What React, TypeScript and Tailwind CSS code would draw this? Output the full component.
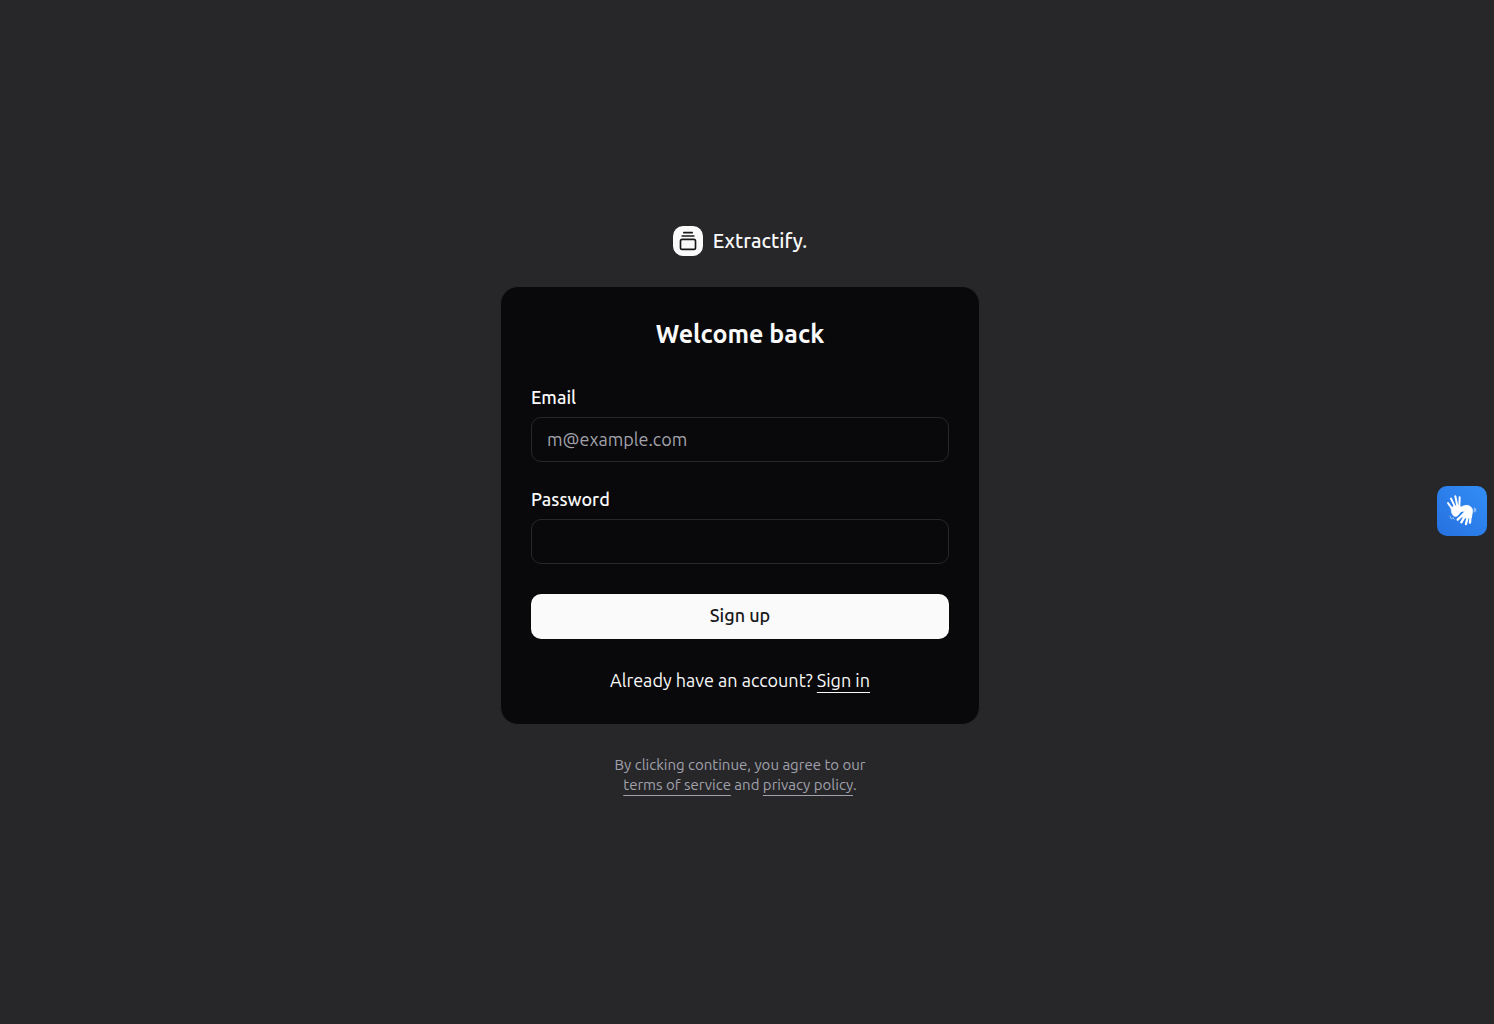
import React from "react";
import { GalleryVerticalEnd } from "lucide-react";

function HandsIcon() {
  return (
    <svg viewBox="0 0 150 150" className="size-[50px]" fill="none" strokeLinecap="round" strokeLinejoin="round" aria-hidden="true">
      <g stroke="#fff" strokeWidth="6">
        <path d="M33 51L47 71M42 38L55 64M55 31L61 60M68 34L67 62" />
      </g>
      <path d="M43 66L50 60L69 59L71 65C65 68 57 72 58 76C63 79 69 76 73 76L61 90C53 94 47 88 44 80Z" fill="#fff" stroke="#fff" strokeWidth="2" />
      <path d="M60 71C68 66 76 59 88 58C99 58 107 66 107 76L103 95L79 96L73 89L83 76C75 75 67 80 60 76Z" fill="#fff" stroke="#fff" strokeWidth="2" />
      <g stroke="#fff" strokeWidth="7">
        <path d="M80 84L62 101M85 88L73 109M93 89L87 114M101 86L99 110" />
      </g>
      <path d="M39 90L43 99L49 94M49 97L52 100M112 66L112 78M116 68L116 76" stroke="#d5e7ff" strokeWidth="2" />
    </svg>
  );
}

const field =
  "h-[45px] w-full rounded-[10px] border border-[#27272a] bg-transparent px-[15px] pb-0.5 text-[18px] text-[#fafafa] outline-none placeholder:text-[#a1a1aa]";

export default function App() {
  return (
    <main className="flex min-h-screen flex-col items-center justify-center gap-[30px] bg-[#27272a] pr-[14px] pb-[3px] font-['Ubuntu','Noto_Sans',sans-serif] text-[#fafafa]">
      <a href="#" className="flex items-center gap-[10px] text-[20px] leading-[30px] font-medium">
        <span className="flex size-[30px] items-center justify-center rounded-[10px] bg-[#fafafa] text-[#18181b]">
          <GalleryVerticalEnd className="size-5" />
        </span>
        Extractify.
      </a>

      <section className="w-full max-w-[480px] rounded-[18px] border border-[#27272a] bg-[#09090b] p-[30px]">
        <h1 className="text-center text-[25px] leading-[35px] font-bold">Welcome back</h1>
        <form className="mt-[38px] flex flex-col gap-[30px]" onSubmit={(e) => e.preventDefault()}>
          <div className="flex flex-col gap-3">
            <label htmlFor="email" className="text-[18px] leading-[15px] font-medium">Email</label>
            <input id="email" type="email" placeholder="m@example.com" className={field} />
          </div>
          <div className="flex flex-col gap-3">
            <label htmlFor="password" className="text-[18px] leading-[15px] font-medium">Password</label>
            <input id="password" type="password" className={field} />
          </div>
          <button type="submit" className="h-[45px] rounded-[10px] bg-[#fafafa] pb-0.5 text-[18px] font-medium text-[#18181b]">
            Sign up
          </button>
          <p className="pb-0.5 text-center text-[18px] leading-[23px]">
            Already have an account?{" "}
            <a href="#" className="underline underline-offset-[5px]">Sign in</a>
          </p>
        </form>
      </section>

      <p className="text-center text-[15px] leading-5 text-[#a1a1aa]">
        By clicking continue, you agree to our
        <br />
        <a href="#" className="underline underline-offset-[5px]">terms of service</a> and{" "}
        <a href="#" className="underline underline-offset-[5px]">privacy policy</a>.
      </p>

      <button
        type="button"
        aria-label="Sign language translation"
        className="fixed top-1/2 right-[7px] -mt-[26px] size-[50px] rounded-[10px] bg-linear-to-tr from-[#2670e0] to-[#338ef7]"
      >
        <HandsIcon />
      </button>
    </main>
  );
}
